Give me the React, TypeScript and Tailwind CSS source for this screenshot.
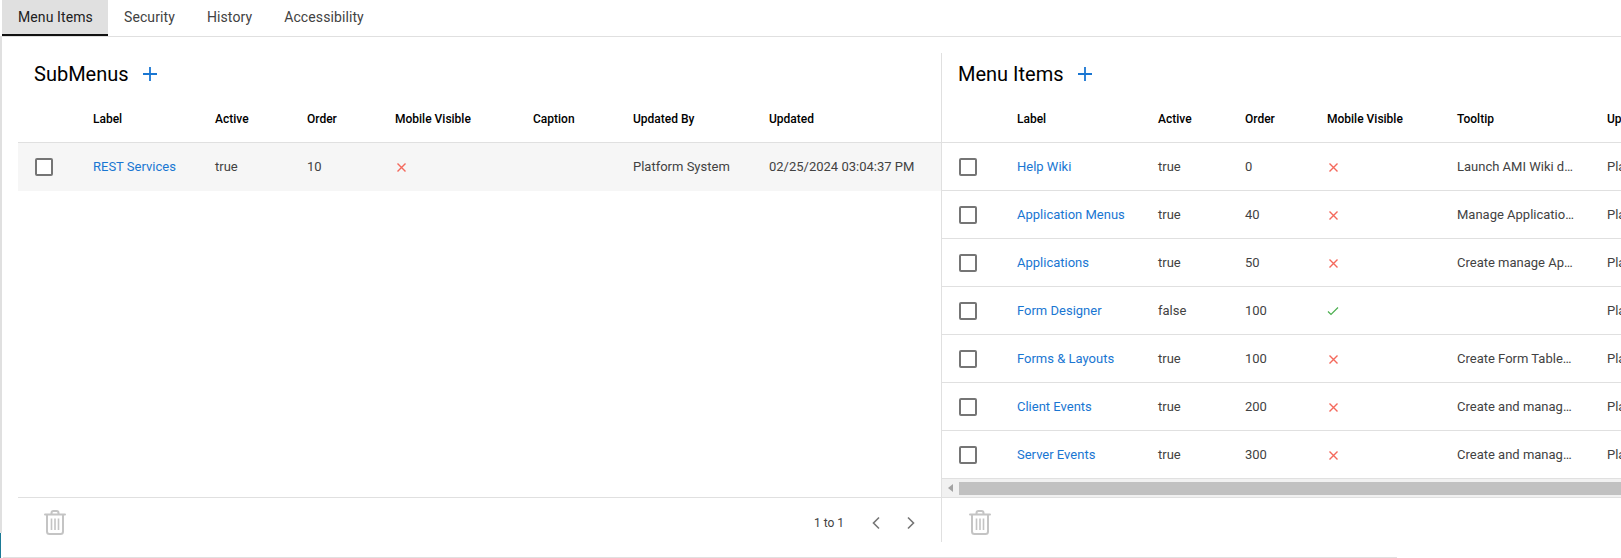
import React from "react";

const X = () => (
  <svg width="12" height="12" viewBox="0 0 12 12" className="block">
    <path d="M2.5 2.5 L10.5 10.5 M10.5 2.5 L2.5 10.5" stroke="#f4695c" strokeWidth="1.4" fill="none" />
  </svg>
);
const Check = () => (
  <svg width="12" height="12" viewBox="0 0 12 12" className="block">
    <path d="M1 6.5 L4 9.5 L11 2.5" stroke="#4caf50" strokeWidth="1.2" fill="none" />
  </svg>
);
const Plus = () => (
  <svg width="16" height="16" viewBox="0 0 16 16" className="block">
    <path d="M8 1 V15 M1 8 H15" stroke="#1976d2" strokeWidth="1.8" fill="none" />
  </svg>
);
const Trash = () => (
  <svg width="22" height="25" viewBox="0 0 22 25" className="block" fill="none" stroke="#c4c4c4">
    <path d="M1 4.5 H21" strokeWidth="2" strokeLinecap="round" />
    <path d="M7.5 4 V3 A2 2 0 0 1 9.5 1 H12.5 A2 2 0 0 1 14.5 3 V4" strokeWidth="2" />
    <path d="M3 5 V21.5 A2.5 2.5 0 0 0 5.5 24 H16.5 A2.5 2.5 0 0 0 19 21.5 V5" strokeWidth="2" />
    <path d="M7.5 8.5 V20 M11 8.5 V20 M14.5 8.5 V20" strokeWidth="1.6" />
  </svg>
);
const Chevron = ({ left }: { left?: boolean }) => (
  <svg width="10" height="14" viewBox="0 0 10 14" className="block mt-[1px]">
    <path d={left ? "M8 1.5 L2.5 7 L8 12.5" : "M2 1.5 L7.5 7 L2 12.5"} stroke="#757575" strokeWidth="1.6" fill="none" />
  </svg>
);
const Box = () => <div className="w-[18px] h-[18px] border-2 border-[#757575] rounded-[2px] bg-white" />;

const Tab = ({ label, active }: { label: string; active?: boolean }) => (
  <div
    className={
      active
        ? "w-[106px] pl-4 h-[36px] flex items-center bg-[#e0e0e0] border-b-2 border-[#111111] text-[#212121]"
        : "px-4 h-[36px] pb-[2px] flex items-center text-[#424242]"
    }
  >
    {label}
  </div>
);

const subCols = "grid grid-cols-[75px_122px_92px_88px_138px_100px_136px_150px]";
const menuCols = "grid grid-cols-[75px_141px_87px_82px_130px_150px_200px]";

const menuRows: [string, string, string, boolean, string][] = [
  ["Help Wiki", "true", "0", false, "Launch AMI Wiki docs"],
  ["Application Menus", "true", "40", false, "Manage Application Menus"],
  ["Applications", "true", "50", false, "Create manage Apps"],
  ["Form Designer", "false", "100", true, ""],
  ["Forms & Layouts", "true", "100", false, "Create Form Tables Layouts"],
  ["Client Events", "true", "200", false, "Create and manage events"],
  ["Server Events", "true", "300", false, "Create and manage events"],
];

const Head = ({ items, cols }: { items: string[]; cols: string }) => (
  <div className={`${cols} h-[48px] shrink-0 items-center border-b border-[#e0e0e0] text-[12px] font-medium text-black`}>
    <div />
    {items.map((t) => (
      <div key={t} className="whitespace-nowrap">{t}</div>
    ))}
  </div>
);

export default function App() {
  return (
    <div className="w-[1621px] h-[558px] overflow-hidden bg-white flex flex-col text-[13px] text-[#424242] font-['Roboto',sans-serif]">
      <div className="flex h-[37px] shrink-0 pl-[2px] border-b border-[#e0e0e0] text-[14px] tracking-[0.1px]">
        <Tab label="Menu Items" active />
        <Tab label="Security" />
        <Tab label="History" />
        <Tab label="Accessibility" />
      </div>
      <div className="relative flex-1 min-h-0 flex flex-col border-l-2 border-[#e0e0e0]">
        <div className="absolute -left-[2px] bottom-0 w-[2px] h-[25px] bg-white">
          <div className="w-px h-full bg-[#1b7a96]" />
        </div>
        <div className="h-[505px] shrink-0 pt-[16px] pl-[16px] flex items-start overflow-hidden">
          <section className="w-[924px] shrink-0 h-[489px] flex flex-col border-r border-[#e0e0e0]">
            <div className="flex items-center h-[42px] pl-[16px] text-[20px] text-black gap-[13px] shrink-0">
              SubMenus <Plus />
            </div>
            <Head cols={subCols} items={["Label", "Active", "Order", "Mobile Visible", "Caption", "Updated By", "Updated"]} />
            <div className={`${subCols} h-[48px] shrink-0 items-center bg-[#f6f6f6]`}>
              <div className="pl-[17px]"><Box /></div>
              <div className="text-[#1976d2]">REST Services</div>
              <div>true</div>
              <div>10</div>
              <div><X /></div>
              <div />
              <div>Platform System</div>
              <div className="whitespace-nowrap">02/25/2024 03:04:37 PM</div>
            </div>
            <div className="flex-1 border-b border-[#e0e0e0]" />
            <div className="h-[44px] shrink-0 flex items-center pt-[4px] pl-[26px] pr-[25px]">
              <Trash />
              <div className="ml-auto text-[12px] mr-[27px] mt-[1px]">1 to 1</div>
              <Chevron left />
              <div className="w-[25px]" />
              <Chevron />
            </div>
          </section>
          <section className="flex-1 min-w-0 h-[489px] flex flex-col overflow-hidden">
            <div className="flex items-center h-[42px] pl-[16px] text-[20px] text-black gap-[13px] shrink-0">
              Menu Items <Plus />
            </div>
            <Head cols={menuCols} items={["Label", "Active", "Order", "Mobile Visible", "Tooltip", "Updated By"]} />
            {menuRows.map(([l, a, o, m, t]) => (
              <div key={l} className={`${menuCols} h-[48px] shrink-0 items-center border-b border-[#e0e0e0]`}>
                <div className="pl-[17px]"><Box /></div>
                <div className="text-[#1976d2] whitespace-nowrap">{l}</div>
                <div>{a}</div>
                <div>{o}</div>
                <div>{m ? <Check /> : <X />}</div>
                <div className="pr-[31px] min-w-0"><div className="truncate">{t}</div></div>
                <div className="whitespace-nowrap">Platform System</div>
              </div>
            ))}
            <div className="h-[19px] shrink-0 bg-[#f1f1f1] flex items-center border-b border-[#e0e0e0]">
              <div className="w-[17px] flex justify-center">
                <div className="w-0 h-0 border-y-[4px] border-y-transparent border-r-[5px] border-r-[#a3a3a3]" />
              </div>
              <div className="flex-1 h-[13px] mt-[1px] bg-[#c1c1c1]" />
            </div>
            <div className="h-[44px] shrink-0 flex items-center pt-[4px] pl-[27px]">
              <Trash />
            </div>
          </section>
        </div>
        <div className="h-[15px]" />
        <div className="ml-px w-[1394px] h-px bg-[#e0e0e0]" />
      </div>
    </div>
  );
}
